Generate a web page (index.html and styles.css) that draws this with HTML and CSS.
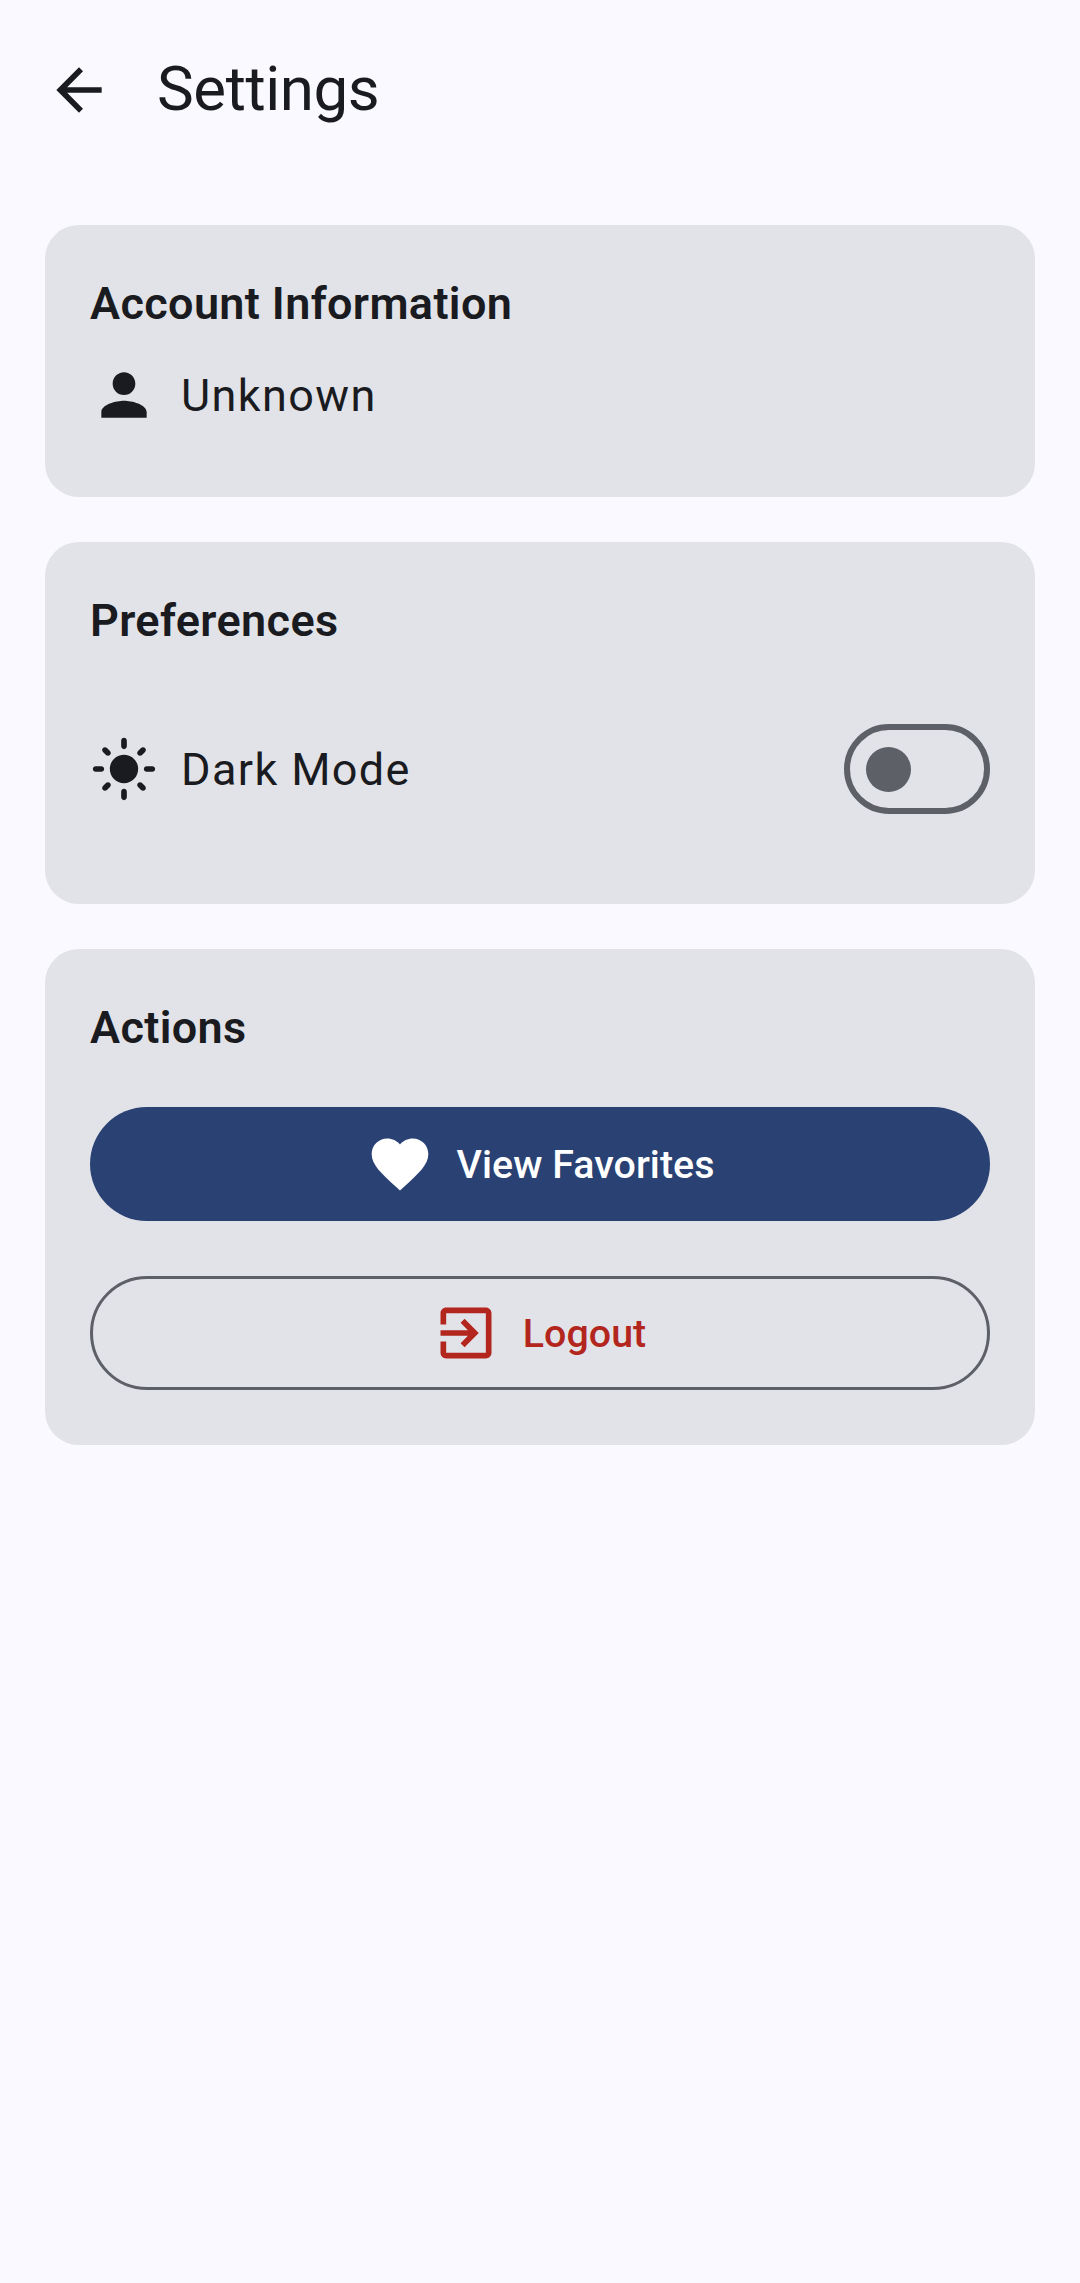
FILE: index.html
```html
<!DOCTYPE html>
<html lang="en">
<head>
<meta charset="utf-8">
<title>Settings</title>
<link rel="stylesheet" href="styles.css">
</head>
<body>
<header class="top-bar">
  <svg class="icon" viewBox="0 0 24 24"><path d="M20 11H7.83l5.59-5.59L12 4l-8 8 8 8 1.41-1.41L7.83 13H20v-2z"/></svg>
  <h1 class="page-title">Settings</h1>
</header>
<main class="cards">
  <section class="card">
    <h2 class="card-title">Account Information</h2>
    <div class="row account-row">
      <svg class="icon" viewBox="0 0 24 24"><path d="M12 12c2.21 0 4-1.79 4-4s-1.79-4-4-4-4 1.79-4 4 1.79 4 4 4zm0 2c-2.67 0-8 1.34-8 4v2h16v-2c0-2.66-5.33-4-8-4z"/></svg>
      <span class="row-label">Unknown</span>
    </div>
  </section>
  <section class="card">
    <h2 class="card-title">Preferences</h2>
    <div class="row preference-row">
      <svg class="icon" viewBox="0 0 24 24"><path d="M12 7c-2.76 0-5 2.24-5 5s2.24 5 5 5 5-2.24 5-5-2.24-5-5-5zM2 13h2c.55 0 1-.45 1-1s-.45-1-1-1H2c-.55 0-1 .45-1 1s.45 1 1 1zM20 13h2c.55 0 1-.45 1-1s-.45-1-1-1h-2c-.55 0-1 .45-1 1s.45 1 1 1zM11 2v2c0 .55.45 1 1 1s1-.45 1-1V2c0-.55-.45-1-1-1s-1 .45-1 1zM11 20v2c0 .55.45 1 1 1s1-.45 1-1v-2c0-.55-.45-1-1-1s-1 .45-1 1zM5.99 4.58c-.39-.39-1.03-.39-1.41 0-.39.39-.39 1.03 0 1.41l1.06 1.06c.39.39 1.03.39 1.41 0s.39-1.03 0-1.41L5.99 4.58zM18.36 16.95c-.39-.39-1.03-.39-1.41 0-.39.39-.39 1.03 0 1.41l1.06 1.06c.39.39 1.03.39 1.41 0 .39-.39.39-1.03 0-1.41l-1.06-1.06zM19.42 5.99c.39-.39.39-1.03 0-1.41-.39-.39-1.03-.39-1.41 0l-1.06 1.06c-.39.39-.39 1.03 0 1.41s1.03.39 1.41 0l1.06-1.06zM7.05 18.36c.39-.39.39-1.03 0-1.41-.39-.39-1.03-.39-1.41 0l-1.06 1.06c-.39.39-.39 1.03 0 1.41s1.03.39 1.41 0l1.06-1.06z"/></svg>
      <span class="row-label">Dark Mode</span>
      <span class="switch" role="switch" aria-checked="false"><span class="thumb"></span></span>
    </div>
  </section>
  <section class="card">
    <h2 class="card-title">Actions</h2>
    <div class="actions">
      <button class="button filled">
        <svg class="icon" viewBox="0 0 24 24"><path d="M12 21.35l-1.45-1.32C5.4 15.36 2 12.28 2 8.5 2 5.42 4.42 3 7.5 3c1.74 0 3.41.81 4.5 2.09C13.09 3.81 14.76 3 16.5 3 19.58 3 22 5.42 22 8.5c0 3.78-3.4 6.86-8.55 11.54L12 21.35z"/></svg>
        <span class="button-label">View Favorites</span>
      </button>
      <button class="button outlined">
        <svg class="icon" viewBox="0 0 24 24"><path d="M10.09 15.59L11.5 17l5-5-5-5-1.41 1.41L12.67 11H3v2h9.67l-2.58 2.59zM19 3H5c-1.11 0-2 .9-2 2v4h2V5h14v14H5v-4H3v4c0 1.1.89 2 2 2h14c1.1 0 2-.9 2-2V5c0-1.1-.9-2-2-2z"/></svg>
        <span class="button-label">Logout</span>
      </button>
    </div>
  </section>
</main>
</body>
</html>
```
FILE: styles.css
```css
* {
  box-sizing: border-box;
}

body {
  margin: 0;
  min-height: 2283px;
  background: #f9f9ff;
  color: #1a1b20;
  font-family: Roboto, sans-serif;
}

.icon {
  display: block;
  flex: none;
  width: 68px;
  height: 68px;
  fill: currentColor;
}

.top-bar {
  display: flex;
  align-items: center;
  gap: 44px;
  height: 180px;
  padding: 0 45px;
}

.page-title {
  margin: 0;
  padding-bottom: 2px;
  font-size: 61.875px;
  font-weight: 400;
  line-height: 78px;
  letter-spacing: -0.45px;
}

.cards {
  display: flex;
  flex-direction: column;
  gap: 45px;
  padding: 45px;
}

.card {
  padding: 45px;
  border-radius: 33.75px;
  background: #e2e3e8;
}

.card-title {
  margin: 0;
  font-size: 45px;
  font-weight: 600;
  line-height: 68px;
  letter-spacing: 0.36px;
}

.row {
  display: flex;
  align-items: center;
}

.account-row {
  height: 68px;
  margin: 23px 0;
}

.preference-row {
  height: 136px;
  margin: 46px 0 22px;
}

.row-label {
  flex: 1;
  margin-left: 23px;
  padding-top: 2px;
  font-size: 45px;
  line-height: 68px;
  letter-spacing: 1.38px;
}

.switch {
  display: flex;
  align-items: center;
  width: 146px;
  height: 90px;
  padding-left: 16px;
  border: 6px solid #5e6067;
  border-radius: 45px;
}

.thumb {
  width: 45px;
  height: 45px;
  border-radius: 50%;
  background: #5e6067;
}

.actions {
  display: flex;
  flex-direction: column;
  gap: 55px;
  padding: 45px 0 10px;
}

.button {
  display: flex;
  align-items: center;
  justify-content: center;
  gap: 23px;
  height: 114px;
  padding: 0;
  border: 0;
  border-radius: 57px;
  font: 500 39.375px/56px Roboto, sans-serif;
  letter-spacing: 0.04px;
}

.button-label {
  padding-top: 2px;
}

.filled {
  background: #294173;
  color: #fff;
}

.outlined {
  padding-right: 2px;
  border: 3px solid #5e6067;
  background: transparent;
  color: #b3261e;
}
```
